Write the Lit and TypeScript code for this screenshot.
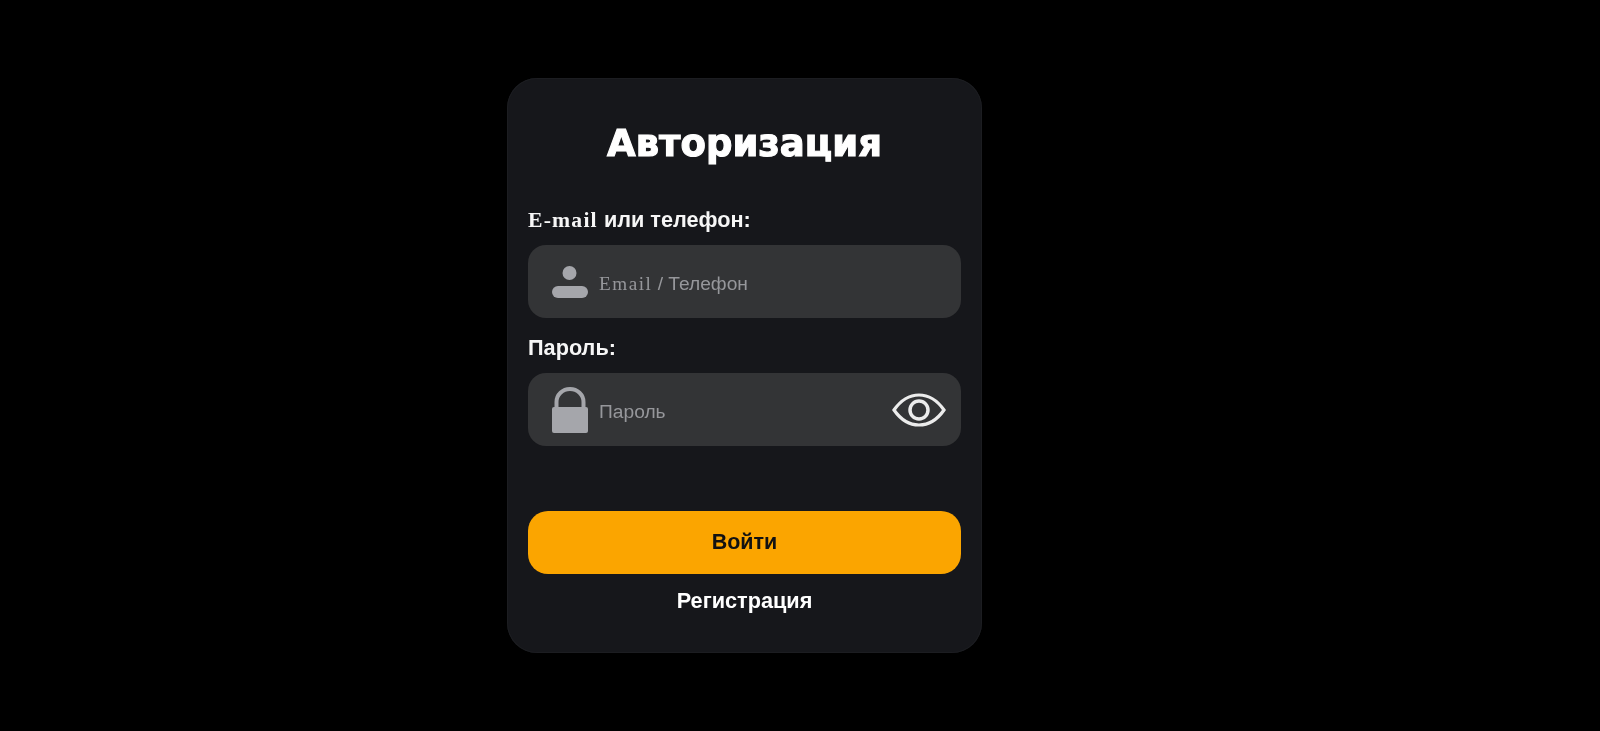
import { LitElement, html, css } from "lit";
import { customElement } from "lit/decorators.js";

@customElement("app-root")
export class AppRoot extends LitElement {
  static styles = css`
    :host {
      display: block;
      width: 100%;
      height: 731px;
      background: #000;
      font-family: "Liberation Sans", Arial, sans-serif;
      overflow: hidden;
    }
    .page {
      height: 731px;
      box-sizing: border-box;
      padding: 78px 0 78px 507px;
      filter: blur(0.6px);
    }
    .card {
      box-sizing: border-box;
      width: 475px;
      height: 575px;
      padding: 41px 21px 0;
      border-radius: 30px;
      background: #16171b;
      box-shadow: inset 0 0 0 1px #1c1d21;
      display: flex;
      flex-direction: column;
    }
    h1 {
      margin: 0 0 39px;
      height: 50px;
      line-height: 50px;
      text-align: center;
      color: #fff;
      font-family: "DejaVu Sans", sans-serif;
      font-weight: 700;
      font-size: 37px;
      -webkit-text-stroke: 1.1px #fff;
    }
    label {
      display: block;
      height: 24px;
      line-height: 24px;
      font-size: 21.7px;
      font-weight: 700;
      color: #f6f6f6;
    }
    .serif {
      font-family: "Liberation Serif", serif;
      letter-spacing: 1.2px;
    }
    .field {
      margin-top: 13px;
      height: 73px;
      border-radius: 18px;
      background: #333436;
      display: flex;
      align-items: center;
      padding: 0 15px 0 24px;
      gap: 11px;
      color: #96979b;
      font-size: 19.2px;
    }
    .field svg.lead {
      width: 36px;
      height: 46px;
      flex: none;
    }
    .text {
      flex: 1;
      position: relative;
      top: 2px;
    }
    .text .serif {
      letter-spacing: 1.5px;
    }
    .eye {
      width: 54px;
      height: 36px;
      flex: none;
    }
    .second {
      margin-top: 18px;
    }
    button {
      margin-top: 65px;
      height: 63px;
      border: none;
      border-radius: 20px;
      background: #fba500;
      color: #121212;
      font: 700 21.5px "Liberation Sans", Arial, sans-serif;
      padding: 0;
    }
    a {
      margin-top: 14px;
      text-align: center;
      color: #fff;
      font-size: 21.7px;
      font-weight: 700;
      line-height: 26px;
    }
  `;

  render() {
    return html`
      <div class="page">
        <div class="card">
          <h1>Авторизация</h1>
          <label><span class="serif">E-mail</span> или телефон:</label>
          <div class="field">
            <svg class="lead" viewBox="0 0 36 46">
              <circle cx="17.5" cy="14" r="7" fill="#a5a6ab"></circle>
              <rect x="0" y="27" width="36" height="12" rx="6" fill="#a5a6ab"></rect>
            </svg>
            <span class="text"><span class="serif">Email</span> / Телефон</span>
          </div>
          <label class="second">Пароль:</label>
          <div class="field">
            <svg class="lead" viewBox="0 0 36 46">
              <path d="M4.5 22V15a13.5 13 0 0 1 27 0v7" fill="none" stroke="#a5a6ab" stroke-width="4"></path>
              <rect x="0" y="20" width="36" height="26" rx="2" fill="#a5a6ab"></rect>
            </svg>
            <span class="text">Пароль</span>
            <svg class="eye" viewBox="0 0 54 36">
              <path d="M2 18C9 8 17 3 27 3s18 5 25 15c-7 10-15 15-25 15S9 28 2 18Z" fill="none" stroke="#ececec" stroke-width="3.2"></path>
              <circle cx="27" cy="18" r="9" fill="none" stroke="#ececec" stroke-width="3.5"></circle>
            </svg>
          </div>
          <button>Войти</button>
          <a>Регистрация</a>
        </div>
      </div>
    `;
  }
}
